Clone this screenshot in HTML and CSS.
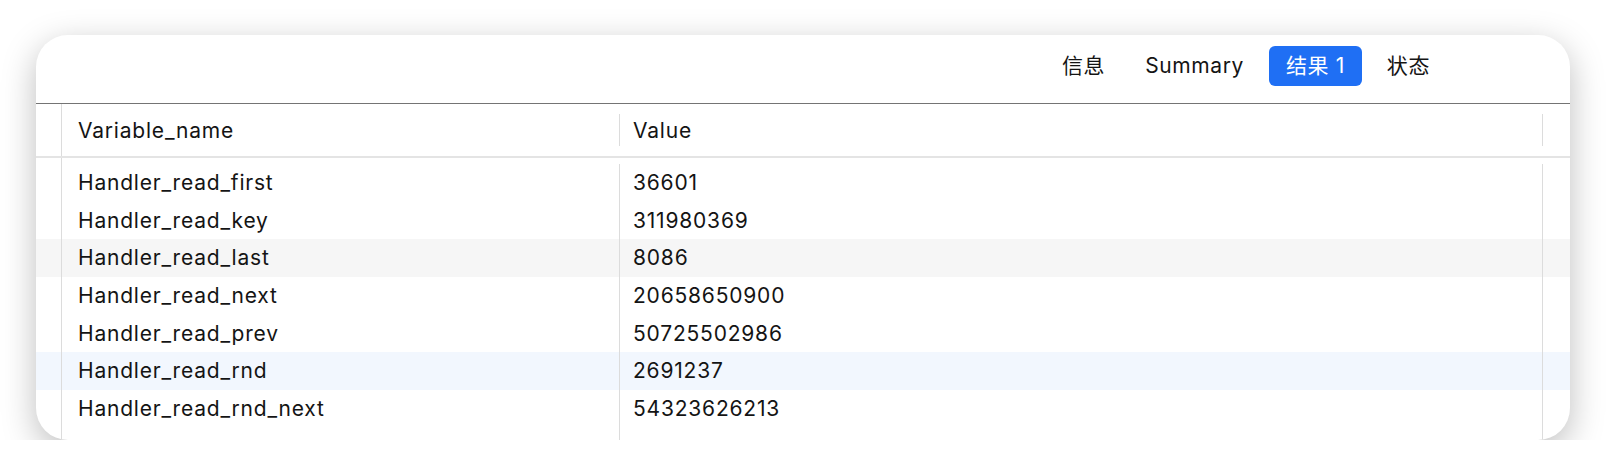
FILE: index.html
```html
<!DOCTYPE html>
<html lang="zh">
<head>
    <meta charset="UTF-8">
    <meta name="viewport" content="width=device-width, initial-scale=1.0">
    <title>结果 1</title>
<link rel="stylesheet" href="styles.css">
</head>
<body>

    <div class="card">
        <div class="toolbar">
            <nav class="tabs">
                <span class="tab">信息</span>
                <span class="tab">Summary</span>
                <span class="tab active">结果 1</span>
                <span class="tab">状态</span>
            </nav>
        </div>

        <div class="grid">
            <div class="grid-head">
                <div class="gutter"></div>
                <div class="head-cell name-col">Variable_name</div>
                <div class="divider"></div>
                <div class="head-cell value-col">Value</div>
                <div class="divider"></div>
                <div class="tail"></div>
            </div>

            <div class="grid-body">
                <div class="row">
                    <div class="gutter"></div>
                    <div class="cell name-col">Handler_read_first</div>
                    <div class="cell value-col">36601</div>
                    <div class="tail"></div>
                </div>
                <div class="row">
                    <div class="gutter"></div>
                    <div class="cell name-col">Handler_read_key</div>
                    <div class="cell value-col">311980369</div>
                    <div class="tail"></div>
                </div>
                <div class="row striped">
                    <div class="gutter"></div>
                    <div class="cell name-col">Handler_read_last</div>
                    <div class="cell value-col">8086</div>
                    <div class="tail"></div>
                </div>
                <div class="row">
                    <div class="gutter"></div>
                    <div class="cell name-col">Handler_read_next</div>
                    <div class="cell value-col">20658650900</div>
                    <div class="tail"></div>
                </div>
                <div class="row">
                    <div class="gutter"></div>
                    <div class="cell name-col">Handler_read_prev</div>
                    <div class="cell value-col">50725502986</div>
                    <div class="tail"></div>
                </div>
                <div class="row hover">
                    <div class="gutter"></div>
                    <div class="cell name-col">Handler_read_rnd</div>
                    <div class="cell value-col">2691237</div>
                    <div class="tail"></div>
                </div>
                <div class="row">
                    <div class="gutter"></div>
                    <div class="cell name-col">Handler_read_rnd_next</div>
                    <div class="cell value-col">54323626213</div>
                    <div class="tail"></div>
                </div>
                <div class="row filler">
                    <div class="gutter"></div>
                    <div class="cell name-col"></div>
                    <div class="cell value-col"></div>
                    <div class="tail"></div>
                </div>
            </div>
        </div>
    </div>

</body>
</html>
```
FILE: styles.css
```css
html {
  font-family: Inter, "Noto Sans CJK SC", sans-serif;
}

body {
  margin: 0;
  padding: 35px 36px 0;
  background-color: #fff;
  color: #141414;
}

.card {
  display: flex;
  flex-direction: column;
  height: 405px;
  background-color: #fff;
  border-radius: 32px;
  box-shadow: 0 10px 34px rgba(0, 0, 0, 0.26);
  overflow: hidden;
}

.toolbar {
  box-sizing: border-box;
  height: 69px;
  padding: 11px 125px 0 0;
  border-bottom: 1px solid #747474;
}

.tabs {
  display: flex;
  justify-content: flex-end;
  gap: 10px;
}

.tab {
  height: 40px;
  line-height: 40px;
  padding: 0 15px;
  border-radius: 6px;
  font-size: 21px;
  letter-spacing: 0.6px;
}

.tab.active {
  padding: 0 17px;
  background-color: #1f6ff4;
  color: #fff;
}

.grid {
  flex: 1;
  display: flex;
  flex-direction: column;
  background: linear-gradient(#dcdcdc, #dcdcdc) 25px 0 / 1px 100% no-repeat;
}

.grid-head {
  display: flex;
  align-items: center;
  height: 52px;
  border-bottom: 2px solid #e4e4e4;
  font-size: 21px;
  letter-spacing: 0.8px;
}

.gutter {
  box-sizing: border-box;
  flex: 0 0 26px;
  align-self: stretch;
  border-right: 1px solid #dcdcdc;
}

.head-cell.name-col {
  width: 557px;
  padding-left: 16px;
  box-sizing: border-box;
}

.head-cell.value-col {
  width: 922px;
  padding-left: 13px;
  box-sizing: border-box;
}

.divider {
  width: 1px;
  height: 32px;
  background-color: #dcdcdc;
}

.tail {
  flex: 1;
}

.grid-body {
  flex: 1;
  display: flex;
  flex-direction: column;
  padding-top: 6px;
}

.row {
  display: flex;
  height: 37.6px;
  font-size: 21px;
  letter-spacing: 0.8px;
}

.row.striped {
  background-color: #f6f6f6;
}

.row.hover {
  background-color: #f2f7fe;
}

.row.filler {
  flex: 1;
}

.cell {
  box-sizing: border-box;
  display: flex;
  align-items: center;
  border-right: 1px solid #dcdcdc;
}

.cell.name-col {
  width: 558px;
  padding-left: 16px;
}

.cell.value-col {
  width: 923px;
  padding-left: 13px;
}
```
